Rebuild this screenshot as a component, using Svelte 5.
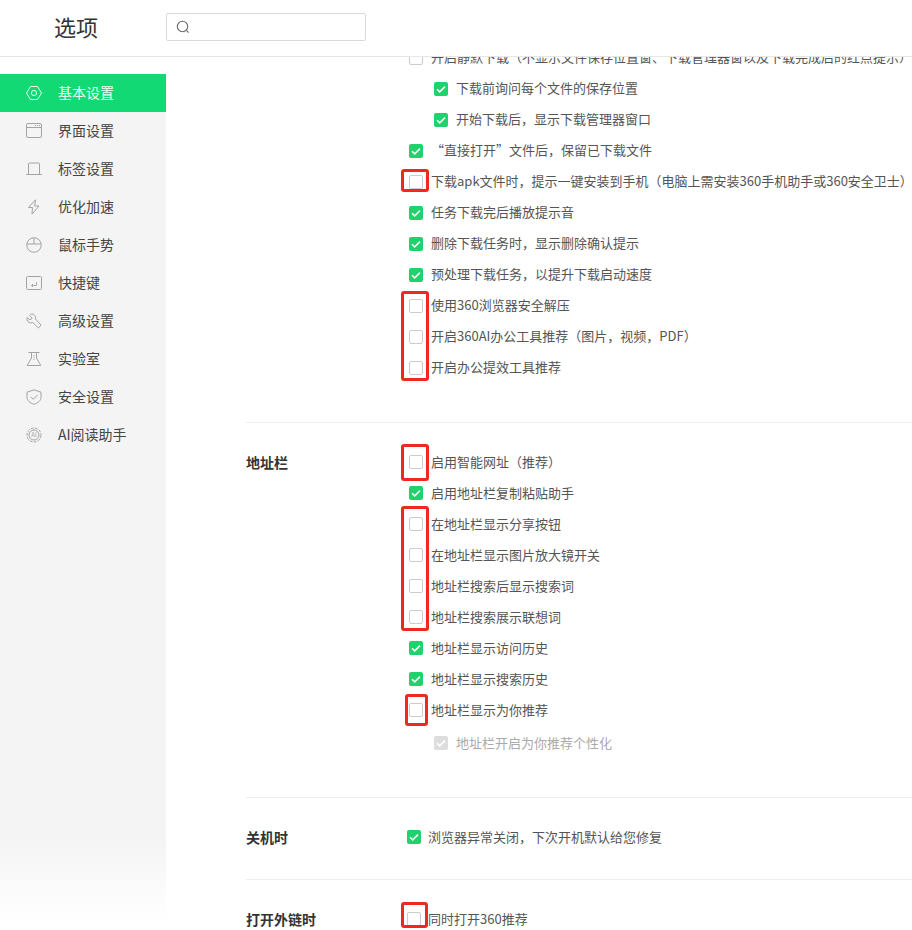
<script>
	const nav = [
		{ label: '基本设置', icon: 'hex', active: true },
		{ label: '界面设置', icon: 'window' },
		{ label: '标签设置', icon: 'tab' },
		{ label: '优化加速', icon: 'bolt' },
		{ label: '鼠标手势', icon: 'mouse' },
		{ label: '快捷键', icon: 'key' },
		{ label: '高级设置', icon: 'wrench' },
		{ label: '实验室', icon: 'flask' },
		{ label: '安全设置', icon: 'shield' },
		{ label: 'AI阅读助手', icon: 'ai' }
	]

	const sections = [
		{
			title: '',
			rows: [
				{ text: '开启静默下载（不显示文件保存位置窗、下载管理器窗以及下载完成后的红点提示）' },
				{ text: '下载前询问每个文件的保存位置', on: true, sub: true },
				{ text: '开始下载后，显示下载管理器窗口', on: true, sub: true },
				{ text: '“直接打开”文件后，保留已下载文件', on: true },
				{ text: '下载apk文件时，提示一键安装到手机（电脑上需安装360手机助手或360安全卫士）' },
				{ text: '任务下载完后播放提示音', on: true },
				{ text: '删除下载任务时，显示删除确认提示', on: true },
				{ text: '预处理下载任务，以提升下载启动速度', on: true },
				{ text: '使用360浏览器安全解压' },
				{ text: '开启360AI办公工具推荐（图片，视频，PDF）' },
				{ text: '开启办公提效工具推荐' }
			]
		},
		{
			title: '地址栏',
			rows: [
				{ text: '启用智能网址（推荐）' },
				{ text: '启用地址栏复制粘贴助手', on: true },
				{ text: '在地址栏显示分享按钮' },
				{ text: '在地址栏显示图片放大镜开关' },
				{ text: '地址栏搜索后显示搜索词' },
				{ text: '地址栏搜索展示联想词' },
				{ text: '地址栏显示访问历史', on: true },
				{ text: '地址栏显示搜索历史', on: true },
				{ text: '地址栏显示为你推荐' },
				{ text: '地址栏开启为你推荐个性化', on: true, sub: true, disabled: true }
			]
		},
		{
			title: '关机时',
			tight: true,
			rows: [{ text: '浏览器异常关闭，下次开机默认给您修复', on: true }]
		},
		{
			title: '打开外链时',
			tight: true,
			rows: [{ text: '同时打开360推荐' }]
		}
	]

	// red review marks drawn over the page
	const marks = [
		{ x: 401, y: 169, w: 28, h: 23 },
		{ x: 401, y: 291, w: 28, h: 90 },
		{ x: 401, y: 444, w: 28, h: 37 },
		{ x: 401, y: 506, w: 28, h: 125 },
		{ x: 405, y: 694, w: 23, h: 32 },
		{ x: 401, y: 902, w: 27, h: 26 }
	]
</script>

<div class="page">
	<header>
		<h1>选项</h1>
		<div class="search">
			<svg width="16" height="16" viewBox="0 0 16 16" fill="none" stroke="#666" stroke-width="1.1">
				<circle cx="7.5" cy="7.5" r="5.2" />
				<path d="M11.4 11.4l2.2 2.2" />
			</svg>
		</div>
	</header>

	<div class="body">
		<aside>
			<ul>
				{#each nav as item}
					<li class:active={item.active}>
						<svg width="16" height="16" viewBox="0 0 16 16" fill="none" stroke="currentColor" stroke-width="1">
							{#if item.icon === 'hex'}
								<path d="M4.5 1.5h7L15.5 8l-4 6.5h-7L.5 8z" />
								<circle cx="8" cy="8" r="2.6" />
							{:else if item.icon === 'window'}
								<rect x=".5" y=".5" width="15" height="14" rx="1.5" />
								<path d="M.5 4.5h15" />
								<path d="M9 2.5h5" stroke-dasharray="1 1" />
							{:else if item.icon === 'tab'}
								<path d="M2.5 13.5V3a1 1 0 0 1 1-1h9a1 1 0 0 1 1 1v10.5" />
								<path d="M.2 13.5h15.6" />
							{:else if item.icon === 'bolt'}
								<path d="M9.5 .8L2.5 8.5h4L6 15.2 13 7H8.7z" />
							{:else if item.icon === 'mouse'}
								<rect x=".8" y=".8" width="14.4" height="14.4" rx="7" />
								<path d="M.8 7h14.4M8 .8V7" />
							{:else if item.icon === 'key'}
								<rect x=".5" y="1.5" width="15" height="13" rx="1" />
								<path d="M10.5 7v3.5H5.5M7 9L5.5 10.5 7 12" stroke-width=".9" />
							{:else if item.icon === 'wrench'}
								<path d="M5.5 1a4 4 0 0 1 4 5L15 12l-2.5 3-5.7-5.5A4 4 0 0 1 1.2 4.5L4 7l2.2-1.8L3.5 2.4A4 4 0 0 1 5.5 1z" />
							{:else if item.icon === 'flask'}
								<path d="M2.5 1.5h11M5.5 1.5V7L1.2 14.5h13.6L10.5 7V1.5" />
								<path d="M8 4v5" stroke-dasharray="1 1" />
							{:else if item.icon === 'shield'}
								<path d="M8 .8l7 2.4v5c0 3.5-3 5.8-7 7-4-1.2-7-3.5-7-7v-5z" />
								<path d="M4.8 7.8L7.4 10.2 11.4 6" />
							{:else}
								<circle cx="8" cy="8" r="7" stroke-dasharray="3 1.2" />
								<circle cx="8" cy="8" r="5" />
								<text x="8" y="10.2" class="ai-mark">AI</text>
							{/if}
						</svg>
						<span>{item.label}</span>
					</li>
				{/each}
			</ul>
		</aside>

		<main>
			{#each sections as section}
				<section class:tight={section.tight}>
					<h2>{section.title}</h2>
					<div class="rows">
						{#each section.rows as row}
							<div class="row" class:sub={row.sub} class:disabled={row.disabled}>
								<span class="box" class:on={row.on}>
									{#if row.on}
										<svg width="14" height="14" viewBox="0 0 14 14" fill="none" stroke="#fff" stroke-width="1.5">
											<path d="M3 7.2l2.7 2.7L11 4.6" />
										</svg>
									{/if}
								</span>
								<span class="label">{row.text}</span>
							</div>
						{/each}
					</div>
				</section>
			{/each}
		</main>
	</div>

	{#each marks as m}
		<div class="mark" style="left:{m.x}px;top:{m.y}px;width:{m.w}px;height:{m.h}px"></div>
	{/each}
</div>

<style>
	:global(body) {
		margin: 0;
		background: #fff;
	}

	.page {
		position: relative;
		width: 912px;
		height: 930px;
		overflow: hidden;
		display: flex;
		flex-direction: column;
		font-family: 'Noto Sans CJK SC', 'Liberation Sans', sans-serif;
		color: #555;
	}

	header {
		flex: none;
		height: 56px;
		display: flex;
		align-items: center;
		border-bottom: 1px solid #e6e6e6;
		box-sizing: content-box;
	}

	h1 {
		margin: 0 0 5px 54px;
		width: 112px;
		font-size: 22px;
		font-weight: 400;
		color: #333;
	}

	.search {
		box-sizing: border-box;
		width: 200px;
		height: 28px;
		margin-bottom: 2px;
		border: 1px solid #d9d9d9;
		border-radius: 2px;
		display: flex;
		align-items: center;
		padding-left: 8px;
	}

	.body {
		flex: 1;
		min-height: 0;
		display: flex;
	}

	aside {
		flex: none;
		width: 166px;
		padding-top: 17px;
		background: linear-gradient(#fff 17px, #f4f4f4 17px, #f4f4f4 780px, #fff 865px);
	}

	ul {
		list-style: none;
		margin: 0;
		padding: 0;
	}

	li {
		height: 38px;
		display: flex;
		align-items: center;
		gap: 16px;
		padding-left: 26px;
		font-size: 14px;
		color: #a3a3a3;
	}

	li span {
		color: #444;
		padding-bottom: 2px;
	}

	li.active {
		background: #12d974;
		color: #e8fff2;
	}

	li.active span {
		color: #e8fff2;
	}

	.ai-mark {
		font-size: 6px;
		text-anchor: middle;
		fill: currentColor;
		stroke: none;
	}

	main {
		flex: 1;
		min-width: 0;
		padding-left: 80px;
		overflow: hidden;
	}

	section {
		display: flex;
		padding-bottom: 39px;
		margin-bottom: 24px;
		border-bottom: 1px solid #eee;
		width: 800px;
	}

	section:first-child {
		margin-top: -15px;
	}

	section.tight {
		padding-bottom: 26px;
	}

	section.tight .row {
		margin-left: -2px;
		gap: 7px;
	}

	h2 {
		flex: none;
		width: 163px;
		margin: 0;
		font-size: 14px;
		font-weight: 700;
		line-height: 30px;
		color: #333;
	}

	.row {
		height: 31px;
		display: flex;
		align-items: center;
		gap: 8px;
		font-size: 13px;
		white-space: nowrap;
	}

	.label {
		padding-bottom: 2px;
	}

	section + section .rows {
		margin: -1px 0 1px;
	}

	section + section .label {
		padding-bottom: 0;
	}

	.row.sub {
		margin-left: 25px;
	}

	.row.disabled {
		height: 35px;
		margin-bottom: -3px;
		color: #aaa;
	}

	.box {
		box-sizing: border-box;
		flex: none;
		width: 14px;
		height: 14px;
		border: 1px solid #ccc;
		border-radius: 2px;
		display: flex;
		background: #fff;
	}

	.box.on {
		border: 0;
		background: #1fd26c;
	}

	.disabled .box.on {
		background: #ddd;
	}

	.mark {
		position: absolute;
		box-sizing: border-box;
		border: 3px solid #ee2a20;
		border-radius: 3px;
	}
</style>
